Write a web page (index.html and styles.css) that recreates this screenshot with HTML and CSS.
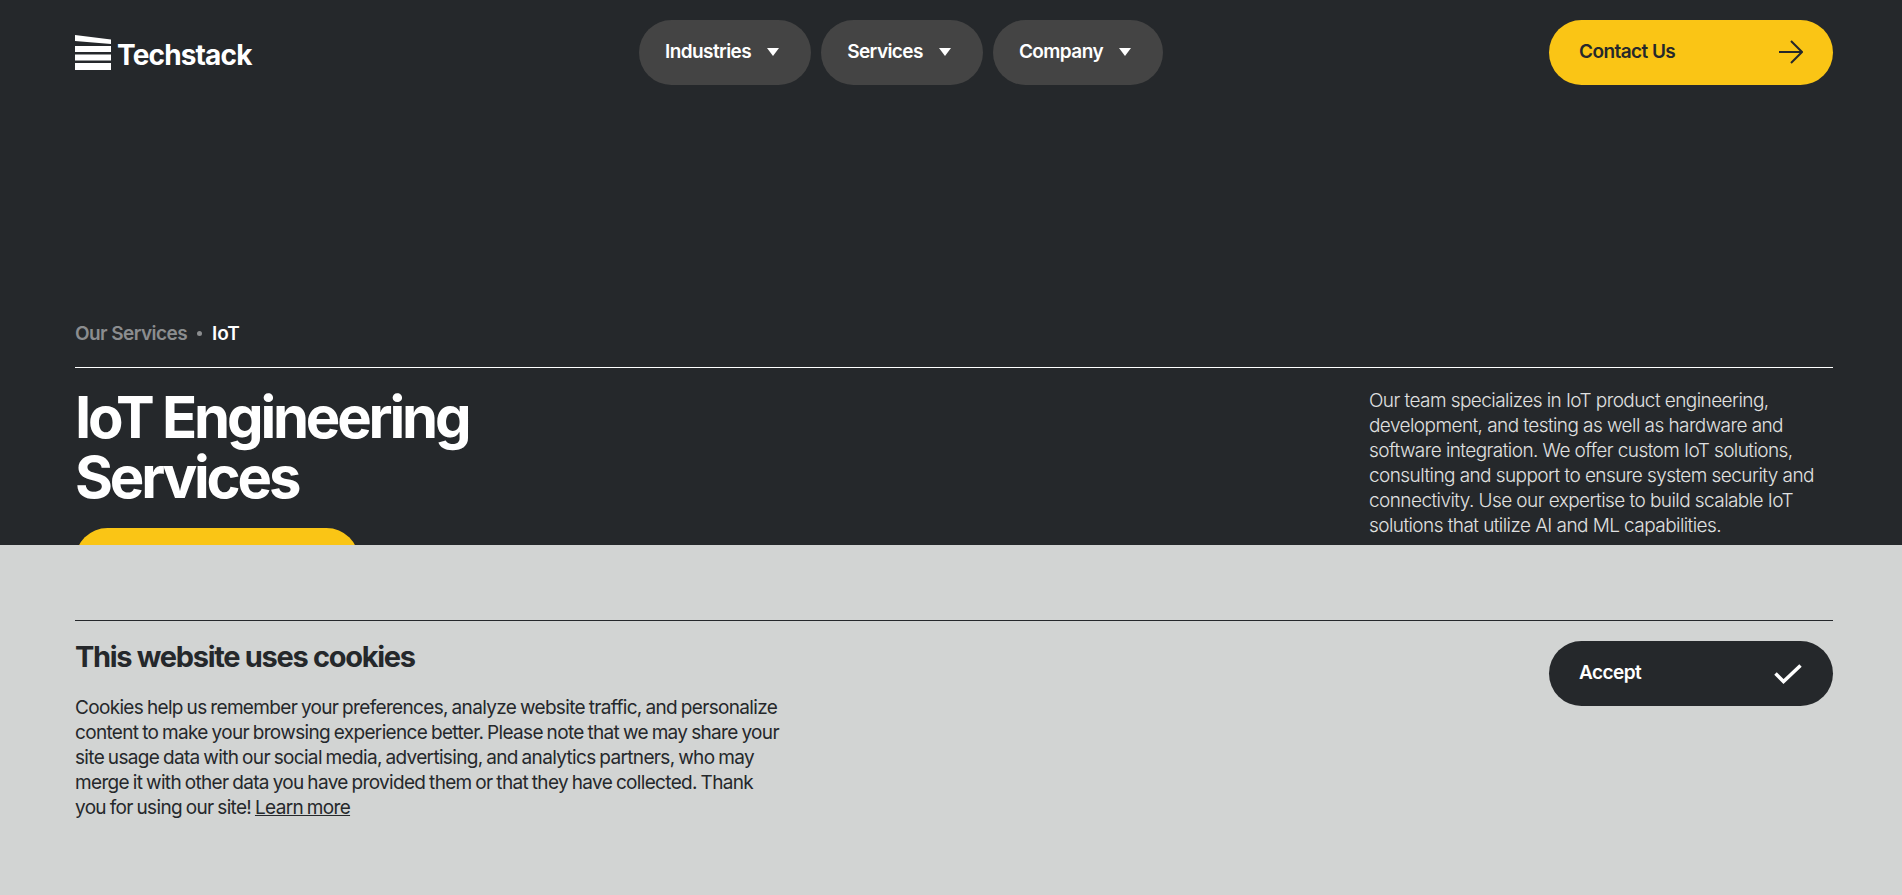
FILE: index.html
```html
<!DOCTYPE html>
<html lang="en">
<head>
<meta charset="utf-8">
<title>IoT Engineering Services | Techstack</title>
<link rel="stylesheet" href="styles.css">
</head>
<body>
<div class="page">
  <header class="header">
    <a class="logo" href="#">
      <svg class="logo-mark" width="36" height="36" viewBox="0 0 36 36"><path fill="#fff" d="M0 0 36 4.500V9L0 6ZM0 11H36V17H0ZM0 19.500H36V25.500H0ZM0 28H36V35H0Z"/></svg>
      <span class="logo-text">Techstack</span>
    </a>
    <nav class="nav">
      <a class="nav-pill" href="#"><span>Industries</span><i class="caret"></i></a>
      <a class="nav-pill" href="#"><span>Services</span><i class="caret"></i></a>
      <a class="nav-pill" href="#"><span>Company</span><i class="caret"></i></a>
    </nav>
    <a class="btn btn-yellow" href="#">
      <span>Contact Us</span>
      <svg width="24" height="24" viewBox="0 0 24 24" fill="none" stroke="#25282b" stroke-width="2"><path d="M0 12H23M12 1 23 12 12 23"/></svg>
    </a>
  </header>
  <main class="hero">
    <div class="crumbs"><span class="crumb-muted">Our Services</span><i class="dot"></i><span class="crumb-current">IoT</span></div>
    <div class="hero-body">
      <div class="hero-left">
        <h1>IoT Engineering<br>Services</h1>
        <a class="btn btn-yellow btn-hero" href="#" aria-label="Contact Us"></a>
      </div>
      <p class="hero-text">Our team specializes in IoT product engineering, development, and testing as well as hardware and software integration. We offer custom IoT solutions, consulting and support to ensure system security and connectivity. Use our expertise to build scalable IoT solutions that utilize AI and ML capabilities.</p>
    </div>
  </main>
  <aside class="cookie">
    <div class="cookie-inner">
      <div class="cookie-copy">
        <h2>This website uses cookies</h2>
        <p>Cookies help us remember your preferences, analyze website traffic, and personalize content to make your browsing experience better. Please note that we may share your site usage data with our social media, advertising, and analytics partners, who may merge it with other data you have provided them or that they have collected. Thank you for using our site! <a href="#">Learn more</a></p>
      </div>
      <a class="btn btn-dark" href="#">
        <span>Accept</span>
        <svg width="30" height="24" viewBox="0 0 30 24" fill="none" stroke="#fff" stroke-width="3.500"><path d="M2.500 12.500 10.500 20.500 27.500 4.500"/></svg>
      </a>
    </div>
  </aside>
</div>
</body>
</html>
```
FILE: styles.css
```css
* { box-sizing: border-box; }
html, body { margin: 0; height: 100%; overflow: hidden; }
body { background: #25282b; color: #fff; font-family: Inter, "Liberation Sans", sans-serif; }
a { color: inherit; text-decoration: none; }
.page { position: relative; height: 895px; overflow: hidden; }
.header { display: flex; justify-content: space-between; align-items: flex-start; padding: 20px 69px 0 75px; }
.logo { display: flex; align-items: flex-start; gap: 6px; padding-top: 15px; width: 178px; }
.logo-text { font-size: 28px; font-weight: 700; letter-spacing: -0.03em; line-height: 32px; margin-top: 4px; white-space: nowrap; }
.nav { display: flex; gap: 10px; }
.nav-pill { display: flex; align-items: center; gap: 16px; height: 65px; padding: 0 32px 2px 26px; border-radius: 33px; background: #444; font-size: 19px; font-weight: 600; letter-spacing: -0.03em; }
.caret { width: 0; height: 0; border-left: 6.500px solid transparent; border-right: 6.500px solid transparent; border-top: 8px solid #fff; }
.btn { display: flex; align-items: center; justify-content: space-between; width: 284px; height: 65px; padding: 0 30px 2px; border-radius: 33px; font-size: 19px; font-weight: 600; letter-spacing: -0.03em; }
.btn-yellow { background: #fac515; color: #25282b; }
.btn-dark { background: #25282b; color: #fff; flex: none; margin-top: 20px; }
.hero { padding: 0 69px 0 75px; margin-top: 228px; }
.crumbs { display: flex; align-items: center; gap: 10px; height: 54px; padding-bottom: 14px; font-size: 19px; font-weight: 600; letter-spacing: -0.03em; }
.crumb-muted { color: #8b8d8f; }
.crumb-current { letter-spacing: -0.005em; }
.dot { width: 5px; height: 5px; border-radius: 50%; background: #8b8d8f; }
.hero-body { display: flex; justify-content: space-between; border-top: 1px solid #fff; padding-top: 19px; }
h1 { margin: 0; font-size: 58px; line-height: 60px; font-weight: 700; letter-spacing: -0.055em; }
.btn-hero { margin-top: 21px; }
.hero-text { width: 464px; margin: 1px 0 0; font-size: 19px; line-height: 25px; font-weight: 300; letter-spacing: -0.03em; color: #e0e1e1; }
.cookie { position: absolute; left: 0; right: 0; bottom: 0; height: 350px; background: #d2d4d3; color: #25282b; padding: 75px 69px 0 75px; }
.cookie-inner { display: flex; justify-content: space-between; align-items: flex-start; border-top: 1px solid #25282b; }
.cookie-copy { width: 710px; padding-top: 18px; }
h2 { margin: 0; font-size: 29px; line-height: 36px; font-weight: 700; letter-spacing: -0.045em; }
.cookie-copy p { margin: 20px 0 0; font-size: 19px; line-height: 25px; font-weight: 400; letter-spacing: -0.035em; word-spacing: -0.9px; }
.cookie-copy p a { text-decoration: underline; }
```
